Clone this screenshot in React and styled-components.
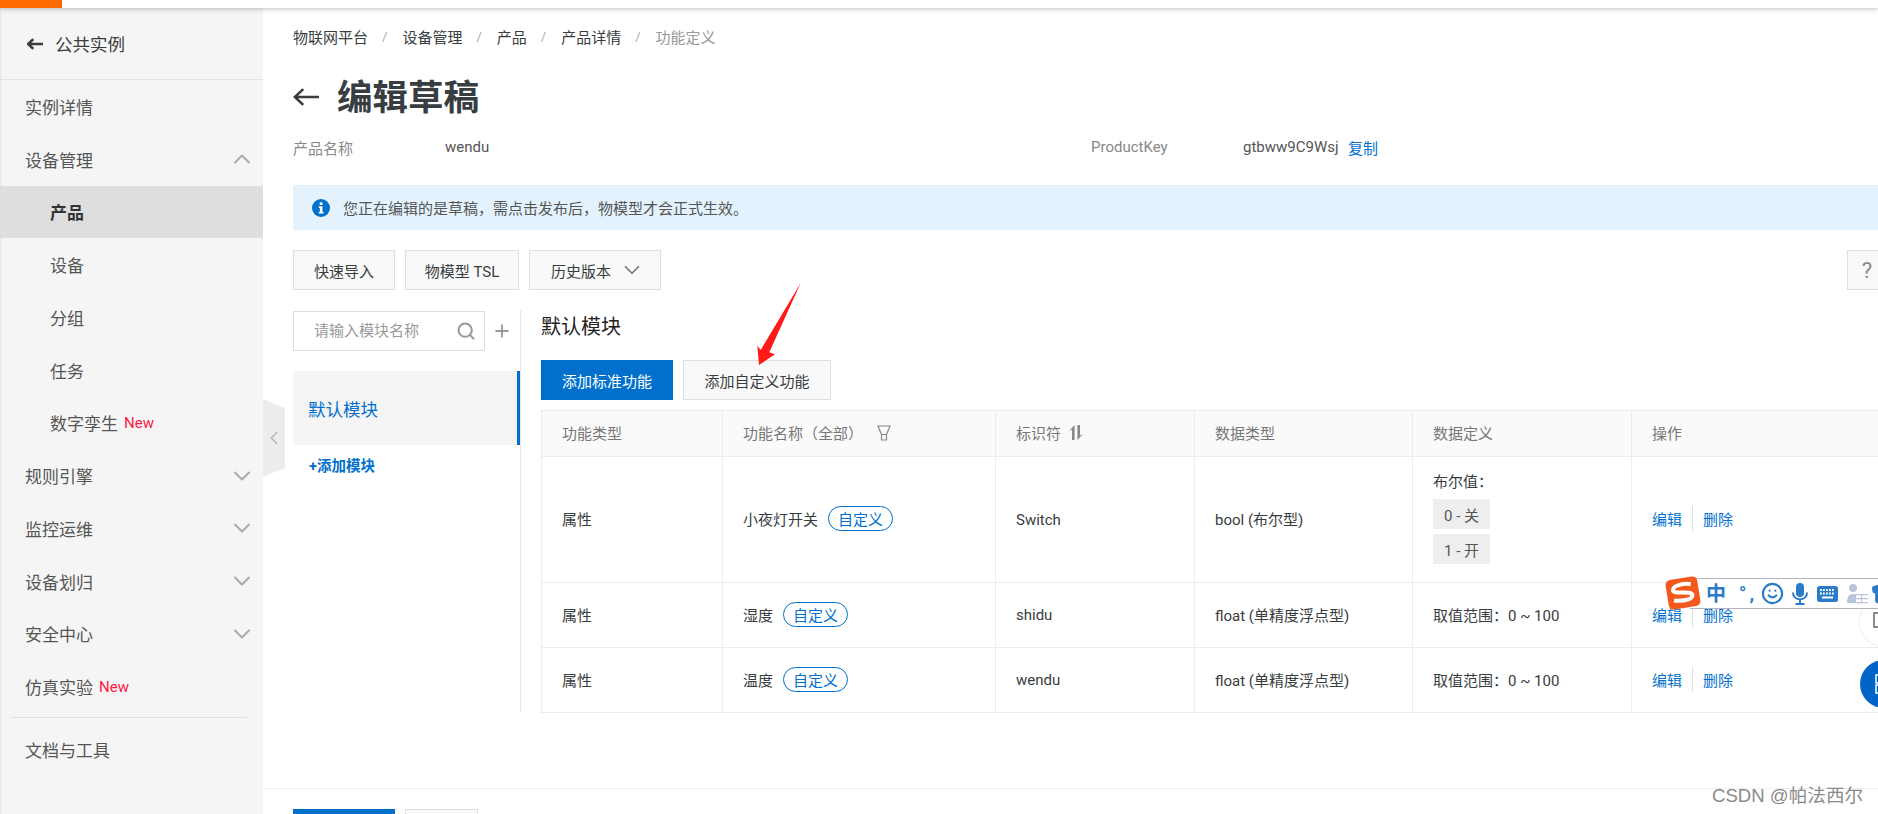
import React from "react";
import styled, { createGlobalStyle } from "styled-components";
import {
  ChevronDown,
  ChevronUp,
  ChevronLeft,
  Search,
  Plus,
  Smile,
  Shirt,
} from "lucide-react";

const GlobalStyle = createGlobalStyle`
  * { box-sizing: border-box; }
  html, body { margin: 0; padding: 0; background: #fff; }
  body {
    font-family: Roboto, "Noto Sans CJK SC", "Liberation Sans", sans-serif;
    color: #373d41;
  }
`;

const Page = styled.div`
  position: relative;
  width: 1878px;
  height: 814px;
  overflow: hidden;
  background: #fff;
`;
const TopBar = styled.div`
  position: relative;
  z-index: 2;
  height: 8px;
  background: #fff;
  box-shadow: 0 1px 5px rgba(0, 0, 0, 0.25);
`;
const TopMark = styled.div`
  width: 62px;
  height: 8px;
  background: #ff6a00;
`;
const Body = styled.div`
  display: flex;
  height: 806px;
`;

/* sidebar */
const Sidebar = styled.aside`
  flex: 0 0 263px;
  background: #f5f5f5;
  box-shadow: inset 2px 0 2px -1px rgba(0, 0, 0, 0.08);
  font-size: 17px;
  color: #555;
`;
const SideHeader = styled.div`
  display: flex;
  align-items: center;
  gap: 12px;
  height: 72px;
  padding-left: 27px;
  border-bottom: 1px solid #e2e2e2;
  color: #373d41;
  font-size: 17.5px;
`;
const SideItem = styled.div`
  display: flex;
  align-items: center;
  height: 52.75px;
  padding-left: ${(p) => (p.$sub ? 50 : 25)}px;
  padding-right: 7px;
  background: ${(p) => (p.$active ? "#dedede" : "transparent")};
  font-weight: ${(p) => (p.$active ? 700 : 400)};
  color: ${(p) => (p.$active ? "#333" : "#555")};
`;
const SideArrow = styled.span`
  display: flex;
  margin-left: auto;
  color: #aaa;
`;
const NewTag = styled.span`
  margin-left: 6px;
  font-size: 15px;
  color: #ff1744;
`;
const SideDivider = styled.div`
  height: 1px;
  margin: 4px 16px 5px 10px;
  background: #e0e0e0;
`;
const Collapse = styled.div`
  position: absolute;
  left: 263px;
  top: 399px;
  width: 22px;
  height: 78px;
  display: flex;
  align-items: center;
  justify-content: center;
  background: #ececec;
  clip-path: polygon(0 0, 100% 12%, 100% 88%, 0 100%);
  color: #b5b5b5;
`;

/* main column */
const Main = styled.main`
  flex: 1;
  min-width: 0;
  overflow: hidden;
`;
const Content = styled.div`
  width: 1627px;
  padding: 17px 0 0 30px;
`;
const Breadcrumb = styled.nav`
  display: flex;
  align-items: center;
  height: 22px;
  font-size: 15px;
  color: #373d41;
`;
const CrumbSep = styled.span`
  margin: 0 15px 0 14px;
  color: #aaa;
  font-size: 13px;
`;
const CrumbLast = styled.span`
  color: #999;
`;
const TitleRow = styled.div`
  display: flex;
  align-items: center;
  gap: 18px;
  height: 50px;
  margin-top: 22px;
`;
const TitleBack = styled.span`
  display: flex;
  margin-top: 6px;
`;
const Title = styled.h1`
  margin: 0;
  font-size: 35.5px;
  font-weight: 700;
  color: #373d41;
`;
const InfoRow = styled.div`
  display: flex;
  align-items: center;
  height: 20px;
  margin-top: 18px;
  font-size: 15px;
`;
const InfoLabel = styled.span`
  width: ${(p) => p.$w}px;
  color: #888;
`;
const InfoValue = styled.span`
  width: ${(p) => p.$w}px;
  color: #555;
`;
const Link = styled.a`
  color: #0070cc;
`;
const Alert = styled.div`
  display: flex;
  align-items: center;
  gap: 13px;
  height: 45px;
  margin-top: 28px;
  padding-left: 19px;
  background: #e3f2fd;
  font-size: 15px;
  color: #555;
`;
const Toolbar = styled.div`
  display: flex;
  gap: 10px;
  margin-top: 20px;
`;
const Button = styled.button`
  display: flex;
  align-items: center;
  justify-content: center;
  gap: 13px;
  flex: none;
  width: ${(p) => p.$w}px;
  height: 40px;
  padding: 0;
  border: 1px solid ${(p) => (p.$primary ? "#0070cc" : "#dedede")};
  background: ${(p) => (p.$primary ? "#0070cc" : "#f9f9f9")};
  color: ${(p) => (p.$primary ? "#fff" : "#373d41")};
  font-family: inherit;
  font-size: 15px;
`;
const HistoryButton = styled(Button)`
  gap: 8px;
  svg {
    margin-right: -6px;
  }
`;
const HelpButton = styled(Button)`
  margin-left: auto;
  margin-right: 3px;
  color: #888;
  font-size: 22px;
`;
const Workspace = styled.div`
  display: flex;
  height: 403px;
  margin-top: 20px;
`;
const ModulePane = styled.div`
  flex: 0 0 228px;
  border-right: 1px solid #e8e8e8;
`;
const SearchRow = styled.div`
  display: flex;
  align-items: center;
  gap: 7px;
  margin-top: 1px;
  color: #999;
`;
const SearchBox = styled.div`
  display: flex;
  align-items: center;
  width: 192px;
  height: 40px;
  padding: 0 8px 0 20px;
  border: 1px solid #dedede;
`;
const SearchInput = styled.input`
  flex: 1;
  min-width: 0;
  border: 0;
  outline: 0;
  padding: 0;
  background: transparent;
  font-family: inherit;
  font-size: 15px;
  &::placeholder {
    color: #999;
    opacity: 1;
  }
`;
const ModuleItem = styled.div`
  display: flex;
  align-items: center;
  height: 74px;
  margin-top: 20px;
  padding-left: 15px;
  background: #f4f4f4;
  border-right: 3px solid #0070cc;
  color: #0070cc;
  font-size: 17.5px;
`;
const AddModule = styled.div`
  display: flex;
  align-items: center;
  height: 38px;
  padding-left: 16px;
  color: #0070cc;
  font-size: 14.5px;
  font-weight: 700;
`;
const DetailPane = styled.div`
  flex: 1;
  min-width: 0;
  padding-left: 20px;
`;
const Heading = styled.h2`
  margin: 0;
  height: 34px;
  line-height: 34px;
  font-size: 20px;
  font-weight: 400;
  color: #222;
`;
const AddRow = styled.div`
  display: flex;
  gap: 10px;
  margin-top: 16px;
`;
const Table = styled.table`
  width: 100%;
  margin-top: 10px;
  border-collapse: collapse;
  table-layout: fixed;
  font-size: 15px;
`;
const Th = styled.th`
  height: 46px;
  padding: 0 20px 2px;
  border: 1px solid #ececec;
  background: #fafafa;
  color: #777;
  font-weight: 400;
  text-align: left;
`;
const HeadInner = styled.span`
  display: inline-flex;
  align-items: center;
  gap: ${(p) => p.$gap}px;
`;
const Td = styled.td`
  height: ${(p) => p.$h}px;
  padding: 0 20px ${(p) => (p.$latin ? 0 : 2)}px;
  border: 1px solid #ececec;
  color: #373d41;
`;
const NameCell = styled.div`
  display: flex;
  align-items: center;
  gap: 10px;
`;
const Pill = styled.span`
  display: inline-flex;
  align-items: center;
  justify-content: center;
  width: 65px;
  height: 25px;
  border: 1px solid #0070cc;
  border-radius: 13px;
  color: #0070cc;
`;
const BoolBlock = styled.div`
  padding-bottom: 1px;
`;
const BoolTitle = styled.div`
  line-height: 20px;
  margin-bottom: 7px;
`;
const BoolChip = styled.div`
  display: flex;
  align-items: center;
  justify-content: center;
  width: 57px;
  height: 30px;
  margin-top: 5px;
  background: #eeeeee;
  color: #555;
`;
const Actions = styled.div`
  display: flex;
  align-items: center;
  color: #0070cc;
`;
const ActionDivider = styled.span`
  width: 1px;
  height: 25px;
  margin: 0 10px;
  background: #e0e0e0;
`;
const Footer = styled.div`
  display: flex;
  gap: 10px;
  margin-top: 75px;
  padding: 20px 0 0 30px;
  border-top: 1px solid #f0f0f0;
`;

/* things lying over the page */
const RedArrow = styled.svg`
  position: absolute;
  left: 750px;
  top: 280px;
`;
const ImeBar = styled.div`
  position: absolute;
  left: 1690px;
  top: 578px;
  z-index: 3;
  display: flex;
  align-items: center;
  width: 188px;
  height: 31px;
  padding-left: 16px;
  background: #fff;
  border-top: 1px solid #b4b4c0;
  border-bottom: 1px solid #b4b4c0;
  color: #2a7bc8;
  overflow: hidden;
`;
const ImeChar = styled.span`
  font-size: 20px;
  font-weight: 700;
  line-height: 1;
`;
const ImeMark = styled.span`
  margin: 0 4px 0 13px;
  width: 19px;
  font-size: 19px;
  font-weight: 700;
  letter-spacing: 3px;
  line-height: 1;
`;
const ImeIcon = styled.span`
  display: flex;
  flex: none;
  margin-right: ${(p) => p.$gap}px;
`;
const ImeLogo = styled.svg`
  position: absolute;
  left: 1664px;
  top: 574px;
  z-index: 4;
`;
const FloatCircle = styled.div`
  position: absolute;
  left: 1860px;
  top: ${(p) => p.$top}px;
  width: 48px;
  height: 48px;
  padding: ${(p) => p.$pad};
  border-radius: 50%;
  background: ${(p) => (p.$blue ? "#0064c8" : "#fff")};
  box-shadow: ${(p) => (p.$blue ? "none" : "0 0 3px rgba(0,0,0,0.15)")};
`;
const Watermark = styled.div`
  position: absolute;
  left: 1712px;
  top: 784px;
  z-index: 5;
  font-family: "Liberation Sans", "Noto Sans CJK SC", sans-serif;
  font-size: 18.6px;
  line-height: 24px;
  color: #8a8a8a;
  white-space: nowrap;
`;

const crumbs = ["物联网平台", "设备管理", "产品", "产品详情"];

const navItems = [
  { label: "实例详情" },
  { label: "设备管理", arrow: "up" },
  { label: "产品", sub: true, active: true },
  { label: "设备", sub: true },
  { label: "分组", sub: true },
  { label: "任务", sub: true },
  { label: "数字孪生", sub: true, isNew: true },
  { label: "规则引擎", arrow: "down" },
  { label: "监控运维", arrow: "down" },
  { label: "设备划归", arrow: "down" },
  { label: "安全中心", arrow: "down" },
  { label: "仿真实验", isNew: true },
];

const colWidths = [181, 273, 199, 218, 219, 259];

const rows = [
  { name: "小夜灯开关", id: "Switch", type: "bool (布尔型)", h: 126, bool: true },
  { name: "湿度", id: "shidu", type: "float (单精度浮点型)", h: 65 },
  { name: "温度", id: "wendu", type: "float (单精度浮点型)", h: 65 },
];

function LineArrow({ width, height, weight }) {
  return (
    <svg width={width} height={height} viewBox="0 0 28 20" fill="none" stroke="currentColor" strokeWidth={weight}>
      <path d="M2 10H28M11 1.5 2 10l9 8.5" />
    </svg>
  );
}

function InfoIcon() {
  return (
    <svg width="18" height="18" viewBox="0 0 18 18">
      <circle cx="9" cy="9" r="9" fill="#0070cc" />
      <rect x="7.7" y="3.4" width="2.8" height="2.6" fill="#fff" />
      <path d="M6.8 7.3h3.7v5.6h1.1v1.6H6.8v-1.6h1v-4H6.8z" fill="#fff" />
    </svg>
  );
}

function FilterIcon() {
  return (
    <svg width="14" height="16" viewBox="0 0 14 16" fill="none" stroke="#888" strokeWidth="1.2">
      <path d="M1 1h12L9.5 9.5h-5zM4.5 9.5V15h5V9.5" />
    </svg>
  );
}

function SortIcon() {
  return (
    <svg width="14" height="15" viewBox="0 0 14 15" fill="#888">
      <path d="M5.6 0v15H3V4.6L0 6zM8.4 15V0H11v10.4L14 9z" />
    </svg>
  );
}

function MicIcon() {
  return (
    <svg width="16" height="22" viewBox="0 0 16 22" fill="none" stroke="#2a7bc8" strokeWidth="2">
      <rect x="4" y="0" width="8" height="14" rx="4" fill="#2a7bc8" stroke="none" />
      <path d="M1 9.5c0 9 14 9 14 0M8 16.5V21M3.5 21h9" />
    </svg>
  );
}

function KeyboardIcon() {
  return (
    <svg width="21" height="16" viewBox="0 0 21 16">
      <rect width="21" height="16" rx="2.5" fill="#2a7bc8" />
      <path d="M3 4h15M3 7.5h15" stroke="#fff" strokeWidth="1.8" strokeDasharray="1.8 1.2" />
      <rect x="5" y="10.5" width="11" height="2" fill="#fff" />
    </svg>
  );
}

function TableUserIcon() {
  return (
    <svg width="22" height="22" viewBox="0 0 22 22" fill="#b8c4dc">
      <circle cx="7" cy="5" r="4" />
      <path d="M1 20c0-6 2-9 6-9h3v9z" />
      <path d="M8 11h14v1.2H8zM10 15h12v1.2H10zM10 19h12v1.2H10zM15 12h1v8h-1z" />
    </svg>
  );
}

export default function App() {
  return (
    <Page>
      <GlobalStyle />
      <TopBar>
        <TopMark />
      </TopBar>
      <Body>
        <Sidebar>
          <SideHeader>
            <LineArrow width={16} height={14} weight={4.6} />
            公共实例
          </SideHeader>
          {navItems.map((item) => (
            <SideItem key={item.label} $sub={item.sub} $active={item.active}>
              {item.label}
              {item.isNew && <NewTag>New</NewTag>}
              {item.arrow && (
                <SideArrow>
                  {item.arrow === "up" ? (
                    <ChevronUp size={28} strokeWidth={1.7} />
                  ) : (
                    <ChevronDown size={28} strokeWidth={1.7} />
                  )}
                </SideArrow>
              )}
            </SideItem>
          ))}
          <SideDivider />
          <SideItem>文档与工具</SideItem>
        </Sidebar>
        <Main>
          <Content>
            <Breadcrumb>
              {crumbs.map((c) => (
                <React.Fragment key={c}>
                  {c}
                  <CrumbSep>/</CrumbSep>
                </React.Fragment>
              ))}
              <CrumbLast>功能定义</CrumbLast>
            </Breadcrumb>
            <TitleRow>
              <TitleBack>
                <LineArrow width={26} height={20} weight={2.8} />
              </TitleBack>
              <Title>编辑草稿</Title>
            </TitleRow>
            <InfoRow>
              <InfoLabel $w={152}>产品名称</InfoLabel>
              <InfoValue $w={646}>wendu</InfoValue>
              <InfoLabel $w={152}>ProductKey</InfoLabel>
              <InfoValue $w={105}>gtbww9C9Wsj</InfoValue>
              <Link>复制</Link>
            </InfoRow>
            <Alert>
              <InfoIcon />
              您正在编辑的是草稿，需点击发布后，物模型才会正式生效。
            </Alert>
            <Toolbar>
              <Button $w={102}>快速导入</Button>
              <Button $w={114}>物模型 TSL</Button>
              <HistoryButton $w={132}>
                历史版本
                <ChevronDown size={26} strokeWidth={1.6} color="#777" />
              </HistoryButton>
              <HelpButton $w={40}>?</HelpButton>
            </Toolbar>
            <Workspace>
              <ModulePane>
                <SearchRow>
                  <SearchBox>
                    <SearchInput placeholder="请输入模块名称" />
                    <Search size={20} strokeWidth={2.4} color="#999" />
                  </SearchBox>
                  <Plus size={20} strokeWidth={2.2} />
                </SearchRow>
                <ModuleItem>默认模块</ModuleItem>
                <AddModule>+添加模块</AddModule>
              </ModulePane>
              <DetailPane>
                <Heading>默认模块</Heading>
                <AddRow>
                  <Button $w={132} $primary>添加标准功能</Button>
                  <Button $w={148}>添加自定义功能</Button>
                </AddRow>
                <Table>
                  <colgroup>
                    {colWidths.map((w, i) => (
                      <col key={i} width={w} />
                    ))}
                  </colgroup>
                  <thead>
                    <tr>
                      <Th>功能类型</Th>
                      <Th>
                        <HeadInner $gap={14}>
                          功能名称（全部）
                          <FilterIcon />
                        </HeadInner>
                      </Th>
                      <Th>
                        <HeadInner $gap={8}>
                          标识符
                          <SortIcon />
                        </HeadInner>
                      </Th>
                      <Th>数据类型</Th>
                      <Th>数据定义</Th>
                      <Th>操作</Th>
                    </tr>
                  </thead>
                  <tbody>
                    {rows.map((r) => (
                      <tr key={r.id}>
                        <Td $h={r.h}>属性</Td>
                        <Td $h={r.h}>
                          <NameCell>
                            {r.name}
                            <Pill>自定义</Pill>
                          </NameCell>
                        </Td>
                        <Td $h={r.h} $latin>{r.id}</Td>
                        <Td $h={r.h}>{r.type}</Td>
                        <Td $h={r.h}>
                          {r.bool ? (
                            <BoolBlock>
                              <BoolTitle>布尔值：</BoolTitle>
                              <BoolChip>0 - 关</BoolChip>
                              <BoolChip>1 - 开</BoolChip>
                            </BoolBlock>
                          ) : (
                            "取值范围：0 ~ 100"
                          )}
                        </Td>
                        <Td $h={r.h}>
                          <Actions>
                            编辑
                            <ActionDivider />
                            删除
                          </Actions>
                        </Td>
                      </tr>
                    ))}
                  </tbody>
                </Table>
              </DetailPane>
            </Workspace>
          </Content>
          <Footer>
            <Button $w={102} $primary />
            <Button $w={73} />
          </Footer>
        </Main>
      </Body>

      <Collapse>
        <ChevronLeft size={26} strokeWidth={1.6} />
      </Collapse>

      <RedArrow width="60" height="90" viewBox="0 0 60 90">
        <path d="M50.7 3 19.3 72.3 25 74.3 9 85 7.3 65.7 10.7 70Z" fill="#ff1a1a" />
      </RedArrow>

      <FloatCircle $top={598} $pad="14px 0 0 13px">
        <svg width="12" height="16" viewBox="0 0 12 16" fill="none" stroke="#666" strokeWidth="1.5">
          <rect x="1" y="1" width="14" height="14" />
        </svg>
      </FloatCircle>
      <FloatCircle $top={660} $blue $pad="14px 0 0 15px">
        <svg width="12" height="20" viewBox="0 0 12 20" fill="none" stroke="#fff" strokeWidth="1.5">
          <rect x="1" y="1" width="14" height="8" />
          <rect x="1" y="11" width="14" height="8" />
        </svg>
      </FloatCircle>

      <ImeBar>
        <ImeChar>中</ImeChar>
        <ImeMark>°,</ImeMark>
        <ImeIcon $gap={8}><Smile size={23} strokeWidth={2.2} /></ImeIcon>
        <ImeIcon $gap={9}><MicIcon /></ImeIcon>
        <ImeIcon $gap={8}><KeyboardIcon /></ImeIcon>
        <ImeIcon $gap={3}><TableUserIcon /></ImeIcon>
        <ImeIcon $gap={0}><Shirt size={20} fill="#2a7bc8" /></ImeIcon>
      </ImeBar>
      <ImeLogo width="38" height="38" viewBox="0 0 38 38">
        <g transform="rotate(-9 19 19)">
          <rect x="3" y="4" width="32" height="30" rx="5" fill="#f4581c" />
          <path d="M28 11.5C22 9.5 10 9.5 9.5 15c-.4 4 19 2.5 18.5 7.5-.5 5-13 4.5-19 2.5" fill="none" stroke="#fff" strokeWidth="4" />
        </g>
      </ImeLogo>

      <Watermark>CSDN @帕法西尔</Watermark>
    </Page>
  );
}
